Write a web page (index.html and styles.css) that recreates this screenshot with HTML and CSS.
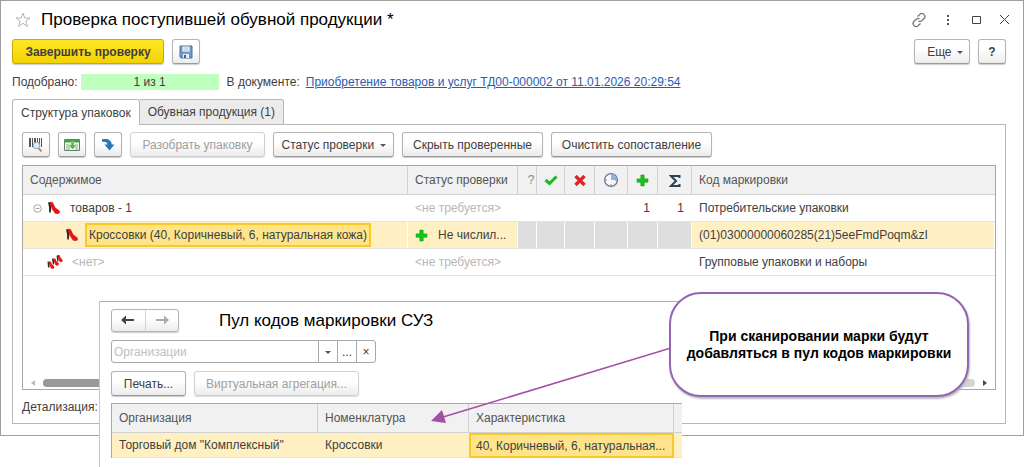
FILE: index.html
```html
<!DOCTYPE html>
<html lang="ru">
<head>
  <meta charset="UTF-8">
  <meta name="viewport" content="width=device-width, initial-scale=1.0">
  <title>Проверка поступившей обувной продукции</title>
  <link rel="stylesheet" href="styles.css">
</head>
<body>
  <!-- shared icons -->
  <svg class="sprite" aria-hidden="true">
    <symbol id="shoe" viewBox="0 0 12 14">
      <path d="M0 1.500L3 1 3.500 5 2.800 11.500H1.200L1 6Z" fill="#2b2b2b"/>
      <path d="M1.500 1.500C3 .2 5 .8 5.600 3L7.300 6.500 11 9.300C12.600 11 12 13 9.500 13L7 12.500 4.500 9 2.800 5Z" fill="#e81515"/>
    </symbol>
    <symbol id="shoes" viewBox="0 0 16 16">
      <path d="M.5 7.500L2.500 8 2.500 13.500H1ZM5 4.500L7 5V10.500H5.800ZM9.500 1.500L11.500 2V7.500H10.300Z" fill="#2b2b2b"/>
      <path d="M1.500 7.500L3.800 7.500 5 10.500 7.300 12.500C7.800 15 5 15.500 3.800 14L2.300 10ZM6 4.500L8.300 4.500 9.500 7.300 11.800 9.300C12.300 11.800 9.500 12.300 8.300 10.800L6.800 7ZM10.300 1L12.600 1 13.600 3.800 15.600 5.800C16 8.300 13.600 8.800 12.500 7.300L11 3.500Z" fill="#e81515"/>
    </symbol>
    <symbol id="plus" viewBox="0 0 12 12">
      <path d="M4.500 1h3v3.500H11v3H7.500V11h-3V7.500H1v-3h3.500z" fill="#17c41c" stroke="#0aa312" stroke-width=".6"/>
    </symbol>
  </svg>

  <div class="desktop">
    <main class="window">
      <header class="titlebar">
        <svg class="star" width="16" height="16" viewBox="0 0 16 16"><path d="M8 1.200L9.800 6H15L10.800 9.200 12.400 14.500 8 11.300 3.600 14.500 5.200 9.200 1 6H6.200Z" fill="#fff" stroke="#b4b4b4"/></svg>
        <h1>Проверка поступившей обувной продукции *</h1>
        <svg class="sys" width="16" height="16" viewBox="0 0 16 16" fill="none" stroke="#777" stroke-width="1.300"><path d="M6.500 4.500L9 2.200C11.500 0 15.500 3.500 13.200 6.500L10.500 9C9.500 9.800 8.300 9.700 7.500 9M9.500 11.500L7 13.800C4.500 16 .5 12.500 2.800 9.500L5.500 7C6.500 6.200 7.700 6.300 8.500 7"/></svg>
        <svg class="sys" width="16" height="16" viewBox="0 0 16 16" fill="#555"><path d="M8 3h2v2H8zM8 7h2v2H8zM8 11h2v2H8z"/></svg>
        <svg class="sys" width="16" height="16" viewBox="0 0 16 16"><path d="M5.500 4.500h8v7h-8z" fill="none" stroke="#444"/></svg>
        <svg class="sys" width="16" height="16" viewBox="0 0 16 16"><path d="M5 3L14 12M14 3L5 12" fill="none" stroke="#444"/></svg>
      </header>

      <div class="commands">
        <button class="btn btn-main" type="button">Завершить проверку</button>
        <button class="btn btn-icon" type="button" aria-label="Записать">
          <svg width="14" height="14" viewBox="0 0 14 14"><path d="M1 1h12v12H2l-1-1z" fill="#6f9cc6" stroke="#44729f"/><path d="M3.500 1.500h7v5h-7z" fill="#fff"/><path d="M4.500 3h5M4.500 5h5" stroke="#9bb4cc"/><path d="M4 9h6v4H4z" fill="#e8eef4"/><path d="M5 10h2v3H5z" fill="#39648f"/></svg>
        </button>
        <span class="spacer"></span>
        <button class="btn btn-more" type="button">Еще <i class="caret"></i></button>
        <button class="btn btn-icon help" type="button">?</button>
      </div>

      <div class="info">
        <span>Подобрано:</span>
        <span class="progress">1 из 1</span>
        <span>В документе:</span>
        <a href="#">Приобретение товаров и услуг ТД00-000002 от 11.01.2026 20:29:54</a>
      </div>

      <div class="tabs">
        <button class="tab active" type="button">Структура упаковок</button>
        <button class="tab" type="button">Обувная продукция (1)</button>
      </div>

      <section class="panel">
        <div class="toolbar">
          <button class="btn btn-icon" type="button" aria-label="Сканировать">
            <svg width="16" height="16" viewBox="0 0 16 16"><path d="M1 1h2v9H1zM4 1h1v9H4zM6 1h2v9H6zM9 1h1v9H9zM11 1h1v9h-1zM13 1h1v9h-1z" fill="#555"/><path d="M10.500 11L13.500 14.500" stroke="#c78a62" stroke-width="2"/><circle cx="8.500" cy="8.500" r="3.300" fill="#dcecf9" stroke="#92a8bd"/></svg>
          </button>
          <button class="btn btn-icon" type="button" aria-label="Загрузить">
            <svg width="16" height="14" viewBox="0 0 16 14"><path d="M.5 1.500h15v11H.5z" fill="#f4f8f2" stroke="#63816a"/><path d="M1 2h14v2.500H1z" fill="#43a545"/><path d="M2 7h4M2 9h4M2 11h4M11 7h3M11 9h3M11 11h3" stroke="#91a58f"/><path d="M7 4h3v3h2.500l-4 4.500L4.500 7H7z" fill="#4dbb3a" stroke="#dff2dc" stroke-width=".5"/></svg>
          </button>
          <button class="btn btn-icon" type="button" aria-label="Перейти">
            <svg width="14" height="14" viewBox="0 0 14 14"><path d="M1 1.500C6 0 10.500 2 10.800 6.500H13.500L8.500 12.500 3.500 6.500H6.500C6.300 4.500 4.500 3.500 1 4Z" fill="#2378b8"/></svg>
          </button>
          <button class="btn btn-unpack" type="button" disabled>Разобрать упаковку</button>
          <button class="btn btn-status" type="button">Статус проверки <i class="caret"></i></button>
          <button class="btn btn-hide" type="button">Скрыть проверенные</button>
          <button class="btn btn-clear" type="button">Очистить сопоставление</button>
        </div>

        <div class="grid">
          <table>
            <colgroup>
              <col class="c-content"><col class="c-status"><col class="c-q"><col class="c-ok"><col class="c-bad"><col class="c-wait"><col class="c-plus"><col class="c-sum"><col>
            </colgroup>
            <thead>
              <tr>
                <th>Содержимое</th>
                <th>Статус проверки</th>
                <th class="mark q">?</th>
                <th class="mark"><svg width="14" height="12" viewBox="0 0 14 12"><path d="M1.500 5L5.500 8.500 12.500 1.500" fill="none" stroke="#1db922" stroke-width="3"/></svg></th>
                <th class="mark"><svg width="14" height="12" viewBox="0 0 14 12"><path d="M2.500 1L11.500 10M11.500 1L2.500 10" fill="none" stroke="#dd2525" stroke-width="3.400"/></svg></th>
                <th class="mark"><svg width="16" height="16" viewBox="0 0 16 16"><circle cx="8" cy="8" r="6.400" fill="#f5f9fd" stroke="#64799a" stroke-width="1.300"/><path d="M8 8V2A6 6 0 0 1 14 8Z" fill="#8fb3e4"/><path d="M2 8h2M12 8h2M8 12v2" stroke="#e06a4a"/></svg></th>
                <th class="mark"><svg width="13" height="13"><use href="#plus"/></svg></th>
                <th class="mark"><svg width="12" height="14" viewBox="0 0 12 14"><path d="M10.500 4V2H2L7 7 2 12H10.500V10" fill="none" stroke="#2f4254" stroke-width="2"/></svg></th>
                <th>Код маркировки</th>
              </tr>
            </thead>
            <tbody>
              <tr>
                <td><div class="node"><svg class="toggle" width="9" height="9" viewBox="0 0 9 9" fill="none" stroke="#a5a5a5"><circle cx="4.500" cy="4.500" r="3.800"/><path d="M2.500 4.500h4"/></svg><svg width="16" height="14"><use href="#shoe"/></svg><span>товаров - 1</span></div></td>
                <td class="muted">&lt;не требуется&gt;</td>
                <td></td><td></td><td></td><td></td>
                <td class="num">1</td>
                <td class="num">1</td>
                <td>Потребительские упаковки</td>
              </tr>
              <tr class="selected">
                <td><div class="node child"><svg width="16" height="14"><use href="#shoe"/></svg><span class="current">Кроссовки (40, Коричневый, 6, натуральная кожа)</span></div></td>
                <td><div class="state"><svg width="13" height="13"><use href="#plus"/></svg><span>Не числил...</span></div></td>
                <td class="off"></td><td class="off"></td><td class="off"></td><td class="off"></td><td class="off"></td><td class="off"></td>
                <td>(01)03000000060285(21)5eeFmdPoqm&amp;zI</td>
              </tr>
              <tr>
                <td><div class="node group"><svg width="16" height="16"><use href="#shoes"/></svg><span class="muted">&lt;нет&gt;</span></div></td>
                <td class="muted">&lt;не требуется&gt;</td>
                <td></td><td></td><td></td><td></td><td></td><td></td>
                <td>Групповые упаковки и наборы</td>
              </tr>
            </tbody>
          </table>
          <div class="scroll">
            <i class="arrow-left"></i>
            <div class="track"><div class="thumb"></div></div>
            <i class="arrow-right"></i>
          </div>
        </div>
        <p class="details">Детализация:</p>
      </section>
    </main>

    <section class="pool">
      <header class="pool-head">
        <div class="nav">
          <button type="button" aria-label="Назад"><svg width="14" height="10" viewBox="0 0 14 10"><path d="M0 5L5 .5V4H13V6H5V9.500Z" fill="#444"/></svg></button>
          <button type="button" aria-label="Вперед"><svg width="14" height="10" viewBox="0 0 14 10"><path d="M14 5L9 .5V4H1V6H9V9.500Z" fill="#aaa"/></svg></button>
        </div>
        <h2>Пул кодов маркировки СУЗ</h2>
      </header>
      <div class="field">
        <input type="text" placeholder="Организации" aria-label="Организации">
        <button type="button" aria-label="Список"><i class="caret"></i></button>
        <button type="button">...</button>
        <button type="button">×</button>
      </div>
      <div class="pool-tools">
        <button class="btn btn-print" type="button">Печать...</button>
        <button class="btn btn-virtual" type="button" disabled>Виртуальная агрегация...</button>
      </div>
      <table class="pool-table">
        <colgroup><col class="p-org"><col class="p-item"><col class="p-char"><col></colgroup>
        <thead>
          <tr><th>Организация</th><th>Номенклатура</th><th>Характеристика</th><th></th></tr>
        </thead>
        <tbody>
          <tr class="selected"><td>Торговый дом "Комплексный"</td><td>Кроссовки</td><td class="current">40, Коричневый, 6, натуральная...</td><td></td></tr>
        </tbody>
      </table>
    </section>

    <svg class="pointer" width="240" height="80" viewBox="0 0 240 80">
      <path d="M240 4L12 73" stroke="#a34fa6" stroke-width="1.600" fill="none"/>
      <path d="M0 77L11 66 15 79Z" fill="#a34fa6"/>
    </svg>
    <div class="callout">При сканировании марки будут добавляться в пул кодов маркировки</div>
  </div>
</body>
</html>
```
FILE: styles.css
```css
* {
  box-sizing: border-box;
}
body {
  margin: 0;
  background: #fff;
  color: #404040;
  font-family: "Liberation Sans", Arial, sans-serif;
  font-size: 12px;
  line-height: 16px;
}
h1, h2, p {
  margin: 0;
}
button, input {
  font: inherit;
  color: inherit;
}
svg {
  flex: none;
}
.sprite {
  position: absolute;
  width: 0;
  height: 0;
}
.desktop {
  position: relative;
  min-height: 100vh;
  overflow: hidden;
}
.window {
  border: 1px solid #a0a0a0;
  padding: 0 17px 11px 11px;
}

/* title */
.titlebar {
  display: flex;
  align-items: center;
  gap: 12px;
  height: 38px;
  margin-right: -5px;
}
.titlebar h1 {
  flex: 1;
  margin-left: -2px;
  font-size: 17px;
  font-weight: normal;
  color: #000;
}
.star {
  margin-left: 3px;
}

/* buttons */
.btn {
  height: 25px;
  padding: 0;
  border: 1px solid #b4b4b4;
  border-bottom-color: #999;
  border-radius: 3px;
  background: linear-gradient(#fff 40%, #ececec);
  box-shadow: 0 1px 1px #ccc;
  white-space: nowrap;
}
.btn:disabled {
  color: #a0a0a0;
  border-color: #d0d0d0;
  box-shadow: 0 1px 1px #ddd;
}
.btn-icon {
  display: flex;
  align-items: center;
  justify-content: center;
  width: 28px;
}
.btn-main {
  width: 152px;
  border-color: #c9a800;
  background: linear-gradient(#ffe727, #f2d200);
  font-weight: bold;
}
.btn-more {
  width: 56px;
  padding-left: 6px;
}
.btn-unpack {
  width: 135px;
}
.btn-status {
  width: 121px;
}
.btn-hide {
  width: 141px;
}
.btn-clear {
  width: 161px;
}
.btn-print {
  width: 75px;
}
.btn-virtual {
  width: 165px;
}
.help {
  font-weight: bold;
}
.caret {
  display: inline-block;
  margin-left: 2px;
  border: 3px solid transparent;
  border-top-color: #555;
  border-bottom: 0;
  vertical-align: middle;
}
.commands, .toolbar, .pool-tools {
  display: flex;
  gap: 8px;
}
.spacer {
  flex: 1;
}

/* info line */
.info {
  display: flex;
  align-items: center;
  margin: 10px 0 9px;
  white-space: nowrap;
}
.info .progress {
  width: 138px;
  margin: 0 8px 0 3px;
  background: #bfffbf;
  text-align: center;
}
.info a {
  margin-left: 6px;
  color: #2a5db0;
}

/* tabs */
.tabs {
  display: flex;
}
.tab {
  height: 25px;
  padding: 0 8px;
  border: 1px solid #b8b8b8;
  border-bottom: 0;
  border-left: 0;
  border-radius: 0 3px 0 0;
  background: #ebebeb;
}
.tab.active {
  position: relative;
  height: 26px;
  margin-bottom: -1px;
  border-left: 1px solid #b8b8b8;
  border-radius: 3px 3px 0 0;
  background: #fff;
}
.panel {
  border: 1px solid #b8b8b8;
  padding: 7px 9px 8px;
}

/* package tree */
.grid {
  display: flex;
  flex-direction: column;
  min-height: 225px;
  margin-top: 8px;
  border: 1px solid #a8a8a8;
}
table {
  width: 100%;
  table-layout: fixed;
  border-collapse: separate;
  border-spacing: 0;
}
th, td {
  padding: 0 0 0 7px;
  font-weight: normal;
  text-align: left;
  white-space: nowrap;
}
th {
  height: 29px;
  border-right: 1px solid #d0d0d0;
  border-bottom: 1px solid #d0d0d0;
  background: #f1f1f1;
  color: #555;
}
th:last-child {
  border-right: 0;
}
td {
  height: 27px;
  border-bottom: 1px solid #e4e4e4;
}
.c-content {
  width: 385px;
}
.c-status {
  width: 110px;
}
.c-q {
  width: 19px;
}
.c-ok {
  width: 28px;
}
.c-bad, .c-plus {
  width: 30px;
}
.c-wait {
  width: 33px;
}
.c-sum {
  width: 34px;
}
th.mark {
  padding: 0;
  text-align: center;
}
th.mark svg {
  vertical-align: middle;
}
th.q {
  padding-left: 8px;
  color: #888;
}
.num {
  padding-right: 8px;
  text-align: right;
}
.muted {
  color: #b8b8b8;
}
.selected td {
  background: #fff0c4;
}
.grid .selected td {
  border-right: 1px solid #fff;
}
.selected td.off {
  background: #dedede;
}
.node {
  display: flex;
  align-items: center;
  gap: 8px;
  padding-left: 3px;
}
.node .toggle {
  margin-right: -4px;
}
.node.child {
  gap: 5px;
  padding-left: 34px;
}
.node.group {
  gap: 9px;
  padding-left: 17px;
}
.node .current {
  height: 24px;
  padding: 2px;
  border: 2px solid #fbc926;
  background: #ffe48c;
}
.state {
  display: flex;
  align-items: center;
  gap: 10px;
}

/* scrollbar */
.scroll {
  display: flex;
  align-items: center;
  gap: 8px;
  margin-top: auto;
  padding: 2px 8px;
}
.track {
  flex: 1;
  height: 8px;
  border-radius: 4px;
  background: #d4d4d4;
}
.thumb {
  width: 65%;
  height: 8px;
  border-radius: 4px;
  background: #999;
}
.arrow-left, .arrow-right {
  border: 3px solid transparent;
}
.arrow-left {
  border-right: 4px solid #bbb;
  border-left: 0;
}
.arrow-right {
  border-left: 4px solid #444;
  border-right: 0;
}
.details {
  margin-top: 9px;
}

/* second window */
.pool {
  position: absolute;
  top: 301px;
  left: 99px;
  width: 583px;
  height: 200px;
  padding: 7px 0 0 11px;
  border-top: 1px solid #b0b0b0;
  border-left: 1px solid #cfc9a8;
  background: #fff;
}
.pool-head {
  display: flex;
  align-items: center;
  gap: 40px;
}
.pool h2 {
  font-size: 17px;
  font-weight: normal;
  color: #000;
}
.nav {
  display: flex;
  width: 68px;
  height: 23px;
  border: 1px solid #b4b4b4;
  border-radius: 3px;
  background: linear-gradient(#fff 40%, #ececec);
  box-shadow: 0 1px 1px #ccc;
}
.nav button {
  flex: 1;
  padding: 0;
  border: 0;
  background: none;
}
.nav button + button {
  border-left: 1px solid #d4d4d4;
}
.field {
  display: flex;
  width: 265px;
  height: 23px;
  margin: 8px 0;
  border: 1px solid #a8a8a8;
  border-radius: 3px;
}
.field input {
  flex: 1;
  min-width: 0;
  padding: 0 2px;
  border: 0;
  background: none;
}
.field input::placeholder {
  color: #c0c0c0;
}
.field button {
  width: 19px;
  padding: 0;
  border: 0;
  border-left: 1px solid #a8a8a8;
  background: none;
}
.field .caret {
  margin: 0;
}
.pool-table {
  margin-top: 7px;
  border-top: 1px solid #a8a8a8;
  border-left: 1px solid #a8a8a8;
}
.p-org {
  width: 206px;
}
.p-item {
  width: 151px;
}
.p-char {
  width: 205px;
}
.pool-table td {
  height: 25px;
}
.pool-table td.current {
  padding-left: 5px;
  border: 2px solid #fbc926;
  background: #ffe48c;
}

/* hint */
.pointer {
  position: absolute;
  top: 344px;
  left: 431px;
}
.callout {
  position: absolute;
  top: 292px;
  left: 669px;
  display: flex;
  align-items: center;
  width: 300px;
  height: 105px;
  border: 2px solid #9464b4;
  border-radius: 32px;
  background: #fff;
  box-shadow: 1px 2px 2px #bbb;
  color: #000;
  font-size: 14px;
  font-weight: bold;
  line-height: 17px;
  text-align: center;
}
```
